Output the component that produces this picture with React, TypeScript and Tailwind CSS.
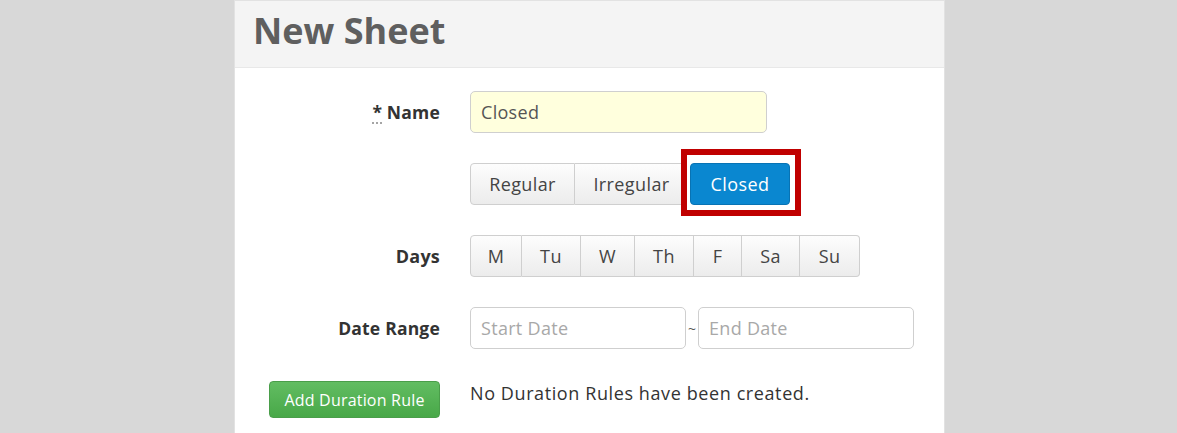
import React from "react";

const font = { fontFamily: '"Open Sans", "Noto Sans", sans-serif' };

function Seg({ label, w, first, last }: { label: string; w: string; first?: boolean; last?: boolean }) {
  return (
    <div
      className={`${w} h-[42px] flex items-center justify-center border border-[#cfcfcf] bg-gradient-to-b from-[#fdfdfd] to-[#ececec] text-[18px] tracking-[0.4px] text-[#444] ${first ? "rounded-l-[4px]" : "border-l-0"} ${last ? "rounded-r-[4px]" : ""}`}
    >
      {label}
    </div>
  );
}

export default function App() {
  return (
    <div className="w-[1177px] h-[433px] overflow-hidden bg-[#d8d8d8]" style={font}>
      <div className="ml-[234px] w-[711px] h-[433px] bg-white border-x border-t border-[#e2e2e2]">
        <div className="h-[67px] bg-[#f4f4f4] border-b border-[#e8e8e8] pl-[18px] pb-[6px] flex items-center">
          <h1 className="text-[36px] font-bold text-[#5f5f5f] leading-none">New Sheet</h1>
        </div>

        <div className="pt-[23px]">
          {/* Name */}
          <div className="flex items-center">
            <div className="w-[205px] text-right text-[17.5px] tracking-[0.2px] font-bold text-[#333]">
              <span className="underline decoration-dotted decoration-[#999] underline-offset-4">*</span> Name
            </div>
            <div className="ml-[30px] w-[297px] h-[42px] rounded-[5px] border border-[#cfcfcf] bg-[#ffffdd] flex items-center px-[10px] text-[18px] tracking-[0.3px] text-[#555]">
              Closed
            </div>
          </div>

          {/* Type toggle */}
          <div className="flex items-center mt-[30px]">
            <div className="w-[205px]" />
            <div className="ml-[30px] flex items-center">
              <Seg label="Regular" w="w-[105px]" first />
              <div className="w-[114px] h-[42px] flex items-center justify-center border border-l-0 border-[#cfcfcf] bg-gradient-to-b from-[#fdfdfd] to-[#ececec] text-[18px] tracking-[0.4px] text-[#444]">
                Irregular
              </div>
              <div className="relative ml-[1px]">
                <div className="w-[100px] h-[42px] flex items-center justify-center rounded-[4px] border border-[#0873b4] bg-[#0a87d0] text-[18px] tracking-[0.4px] text-white">
                  Closed
                </div>
                <div className="absolute left-[-9px] top-[-14px] w-[120px] h-[67px] border-[6px] border-[#c00000] shadow-[inset_0_0_0_2px_#ffffff]" />
              </div>
            </div>
          </div>

          {/* Days */}
          <div className="flex items-center mt-[30px]">
            <div className="w-[205px] text-right text-[18px] tracking-[0.2px] font-bold text-[#333]">Days</div>
            <div className="ml-[30px] flex">
              <Seg label="M" w="w-[52px]" first />
              <Seg label="Tu" w="w-[59px]" />
              <Seg label="W" w="w-[54px]" />
              <Seg label="Th" w="w-[59px]" />
              <Seg label="F" w="w-[48px]" />
              <Seg label="Sa" w="w-[58px]" />
              <Seg label="Su" w="w-[60px]" last />
            </div>
          </div>

          {/* Date Range */}
          <div className="flex items-center mt-[30px]">
            <div className="w-[205px] text-right text-[17.5px] tracking-[0.2px] font-bold text-[#333]">Date Range</div>
            <div className="ml-[30px] flex items-center">
              <div className="w-[216px] h-[42px] rounded-[5px] border border-[#cfcfcf] flex items-center px-[10px] text-[18px] tracking-[0.3px] text-[#a8a8a8]">
                Start Date
              </div>
              <span className="w-[12px] text-center text-[14px] text-[#555]">~</span>
              <div className="w-[216px] h-[42px] rounded-[5px] border border-[#cfcfcf] flex items-center px-[10px] text-[18px] tracking-[0.3px] text-[#a8a8a8]">
                End Date
              </div>
            </div>
          </div>

          {/* Duration rule */}
          <div className="flex items-start mt-[32px]">
            <div className="w-[205px] flex justify-end">
              <div className="w-[171px] h-[37px] rounded-[4px] border border-[#4a9e4a] bg-gradient-to-b from-[#62bd62] to-[#48a848] flex items-center justify-center text-[16px] tracking-[0.2px] text-white">
                Add Duration Rule
              </div>
            </div>
            <div className="ml-[30px] -mt-[1px] text-[18px] tracking-[0.6px] text-[#333]">No Duration Rules have been created.</div>
          </div>
        </div>
      </div>
    </div>
  );
}
